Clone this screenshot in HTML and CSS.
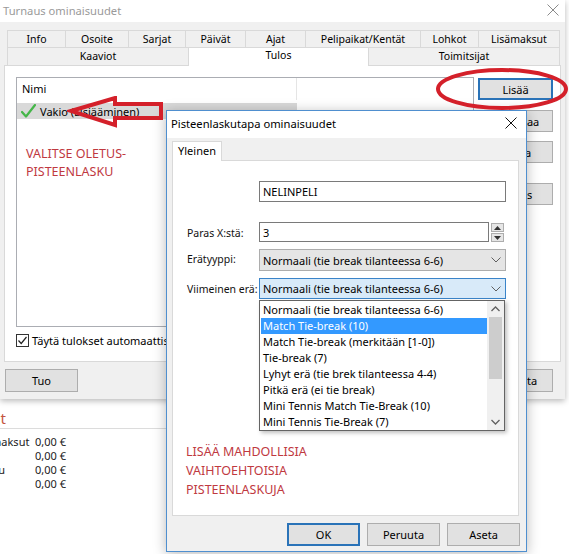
FILE: index.html
```html
<!DOCTYPE html>
<html lang="fi">
<head>
<meta charset="utf-8">
<title>Turnaus ominaisuudet</title>
<link rel="stylesheet" href="styles.css">
</head>
<body>
<div class="desktop">

  <div class="bgwin">
    <div class="bg-head"><span>Maksut</span></div>
    <div class="bg-rule"></div>
    <div class="bg-rows">
      <span class="bg-label">Lisämaksut</span><span>0,00 €</span>
      <span class="bg-label"></span><span>0,00 €</span>
      <span class="bg-label">Maksu</span><span>0,00 €</span>
      <span class="bg-label"></span><span>0,00 €</span>
    </div>
  </div>

  <div class="mainwin">
    <div class="mw-title">
      <span class="mw-title-text">Turnaus ominaisuudet</span>
      <svg class="mw-close" width="12" height="12" viewBox="0 0 12 12"><path d="M0.5 0.5L11.5 11.5M11.5 0.5L0.5 11.5" stroke="#8a8a8a" stroke-width="1" fill="none"/></svg>
    </div>
    <div class="mw-body">
      <div class="tabs">
        <div class="tabrow r1">
          <div class="tab">Info</div>
          <div class="tab">Osoite</div>
          <div class="tab">Sarjat</div>
          <div class="tab">Päivät</div>
          <div class="tab">Ajat</div>
          <div class="tab">Pelipaikat/Kentät</div>
          <div class="tab">Lohkot</div>
          <div class="tab">Lisämaksut</div>
        </div>
        <div class="tabrow r2">
          <div class="tab">Kaaviot</div>
          <div class="tab active">Tulos</div>
          <div class="tab">Toimitsijat</div>
        </div>
      </div>
      <div class="tabpage">
        <div class="listcol">
          <div class="listbox">
            <div class="lb-head"><span class="lb-col">Nimi</span></div>
            <div class="lb-row">
              <svg class="okmark" width="15" height="14" viewBox="0 0 15 14"><path d="M1 8 L5 12.5 L14 1" stroke="#45b649" stroke-width="2.2" fill="none" stroke-linecap="round" stroke-linejoin="round"/></svg>
              <span>Vakio (Lisiääminen)</span>
            </div>
          </div>
          <div class="chk">
            <span class="chkbox"><svg width="11" height="11" viewBox="0 0 11 11"><path d="M1.5 5.5 L4.2 8.5 L9.5 2" stroke="#222" stroke-width="1.2" fill="none"/></svg></span>
            <span>Täytä tulokset automaattisesti</span>
          </div>
        </div>
        <div class="btncol">
          <button class="btn focus">Lisää</button>
          <button class="btn b2">Muokkaa</button>
          <button class="btn b3">Poista</button>
          <button class="btn b4">Oletus</button>
        </div>
      </div>
      <div class="mw-foot">
        <button class="btn">Tuo</button>
        <span class="grow"></span>
        <button class="btn last">Peruuta</button>
      </div>
    </div>
  </div>

  <div class="dialog">
    <div class="dlg-title">
      <span>Pisteenlaskutapa ominaisuudet</span>
      <svg width="12" height="12" viewBox="0 0 12 12"><path d="M0.5 0.5L11.5 11.5M11.5 0.5L0.5 11.5" stroke="#111" stroke-width="1" fill="none"/></svg>
    </div>
    <div class="dlg-body">
      <div class="dtabs"><div class="dtab">Yleinen</div></div>
      <div class="dpage">
        <div class="form">
          <span></span>
          <div class="field text">NELINPELI</div>
          <div class="sep"></div>
          <label class="lbl">Paras X:stä:</label>
          <div class="numrow">
            <div class="field num">3</div>
            <div class="spin">
              <span class="spinbtn"><svg width="7" height="4" viewBox="0 0 7 4"><path d="M0 4 L3.5 0 L7 4Z" fill="#333"/></svg></span>
              <span class="spinbtn"><svg width="7" height="4" viewBox="0 0 7 4"><path d="M0 0 L3.5 4 L7 0Z" fill="#333"/></svg></span>
            </div>
          </div>
          <label class="lbl l2">Erätyyppi:</label>
          <div class="combo">
            <span>Normaali (tie break tilanteessa 6-6)</span>
            <svg width="10" height="6" viewBox="0 0 10 6"><path d="M0.5 0.5 L5 5 L9.5 0.5" stroke="#606060" fill="none"/></svg>
          </div>
          <label class="lbl l3">Viimeinen erä:</label>
          <div class="combo open">
            <span>Normaali (tie break tilanteessa 6-6)</span>
            <svg width="10" height="6" viewBox="0 0 10 6"><path d="M0.5 0.5 L5 5 L9.5 0.5" stroke="#606060" fill="none"/></svg>
            <div class="dropdown">
              <ul class="items">
                <li>Normaali (tie break tilanteessa 6-6)</li>
                <li class="sel">Match Tie-break (10)</li>
                <li>Match Tie-break (merkitään [1-0])</li>
                <li>Tie-break (7)</li>
                <li>Lyhyt erä (tie brek tilanteessa 4-4)</li>
                <li>Pitkä erä (ei tie break)</li>
                <li>Mini Tennis Match Tie-Break (10)</li>
                <li>Mini Tennis Tie-Break (7)</li>
              </ul>
              <div class="vscroll">
                <svg class="arr" width="9" height="6" viewBox="0 0 9 6"><path d="M0.5 5 L4.5 1 L8.5 5" stroke="#606060" stroke-width="1.3" fill="none"/></svg>
                <div class="track"><div class="thumb"></div></div>
                <svg class="arr" width="9" height="6" viewBox="0 0 9 6"><path d="M0.5 1 L4.5 5 L8.5 1" stroke="#606060" stroke-width="1.3" fill="none"/></svg>
              </div>
            </div>
          </div>
        </div>
        <p class="note note-add">LISÄÄ MAHDOLLISIA<br>VAIHTOEHTOISIA<br>PISTEENLASKUJA</p>
      </div>
      <div class="dlg-foot">
        <button class="btn dbtn focus">OK</button>
        <button class="btn dbtn">Peruuta</button>
        <button class="btn dbtn">Aseta</button>
      </div>
    </div>
  </div>

  <p class="note note-default">VALITSE OLETUS-<br>PISTEENLASKU</p>

  <svg class="mark-arrow" width="100" height="40" viewBox="0 0 100 40"><path d="M4 15 L48 2 L48 8 L94 8 L94 22 L48 22 L48 29 Z" stroke="#d4202a" stroke-width="4" fill="none" stroke-linejoin="miter"/></svg>
  <svg class="mark-ellipse" width="136" height="46" viewBox="0 0 136 46"><ellipse cx="67" cy="22" rx="64" ry="19" stroke="#d4202a" stroke-width="4" fill="none"/></svg>

</div>
</body>
</html>
```

FILE: styles.css
```css
* { box-sizing: border-box; }
html, body { margin: 0; padding: 0; }
body {
  width: 569px;
  height: 554px;
  overflow: hidden;
  background: #fff;
  font-family: "Noto Sans", "Open Sans", sans-serif;
  font-size: 11px;
  color: #000;
}
.desktop { position: relative; width: 569px; height: 554px; overflow: hidden; }

/* background window */
.bgwin { position: absolute; left: -29px; top: 408px; width: 220px; }
.bg-head { width: 35px; height: 20px; display: flex; justify-content: flex-end; align-items: center; white-space: nowrap; font-size: 15px; color: #c4553f; }
.bg-rule { height: 1px; background: #dcdcdc; margin-left: 29px; width: 170px; }
.bg-rows { display: grid; grid-template-columns: 64px auto; line-height: 14px; margin-top: 6px; color: #222; }

/* main window */
.mainwin {
  position: absolute; left: 0; top: 0; width: 565px; height: 399px;
  background: #f0f0f0;
  box-shadow: 0 2px 6px rgba(0,0,0,.28);
  display: flex; flex-direction: column;
}
.mw-title { height: 22px; background: #fff; display: flex; align-items: center; justify-content: space-between; padding: 0 6px 2px 3px; }
.mw-title-text { font-size: 11.2px; color: #9a9a9a; }
.mw-body { flex: 1; padding: 8px 4px 0 4px; display: flex; flex-direction: column; }
.tabs { margin-left: 3px; width: 553px; }
.tabrow { display: grid; }
.r1 { grid-template-columns: 59px 63px 57px 60px 60px 115px 58px 81px; height: 17px; }
.r2 { grid-template-columns: 182px 180px 191px; height: 18px; }
.tab {
  border-top: 1px solid #d9d9d9; border-right: 1px solid #d9d9d9;
  background: #f0f0f0; text-align: center; font-size: 10.5px; line-height: 16px; white-space: nowrap;
}
.tab:first-child { border-left: 1px solid #d9d9d9; }
.tab.active { background: #fff; position: relative; z-index: 1; margin-bottom: -1px; line-height: 14px; }

.tabpage {
  height: 297px; background: #fff; border: 1px solid #d9d9d9;
  padding: 11px 0 0 11px; display: flex; gap: 4px;
}
.listcol { width: 458px; display: flex; flex-direction: column; }
.listbox { height: 250px; border: 1px solid #abadb3; background: #fff; }
.lb-head { height: 22px; display: flex; }
.lb-col { width: 280px; border-right: 1px solid #e5e5e5; padding-left: 5px; line-height: 22px; }
.lb-row { margin-top: 3px; height: 16px; width: 280px; background: #d9d9d9; display: flex; align-items: center; gap: 4px; padding-left: 4px; }
.okmark { flex: none; }
.chk { margin-top: 7px; display: flex; align-items: center; gap: 3px; height: 13px; white-space: nowrap; }
.chkbox { width: 13px; height: 13px; border: 1px solid #333; display: flex; align-items: center; justify-content: center; background: #fff; }

.btncol { display: flex; flex-direction: column; padding-top: 1px; }
.btn {
  width: 75px; height: 22px; padding: 0;
  font-family: inherit; font-size: 11px; color: #000;
  background: #e1e1e1; border: 1px solid #adadad;
}
.btn.focus { border: 2px solid #2a73b8; }
.b2 { margin-top: 10px; }
.b3 { margin-top: 9px; }
.b4 { margin-top: 20px; }

.mw-foot { display: flex; gap: 5px; padding: 7px 8px 0 1px; }
.mw-foot .btn { width: 73px; height: 23px; }
.grow { flex: 1; }

/* dialog */
.dialog {
  position: absolute; left: 166px; top: 110px; width: 361px; height: 442px;
  background: #f0f0f0; border: 1px solid #4f8fcf;
  box-shadow: 0 2px 12px rgba(0,0,0,.28);
  display: flex; flex-direction: column;
}
.dlg-title { height: 27px; background: #fff; display: flex; align-items: center; justify-content: space-between; padding: 0 9px 3px 4px; font-size: 11.2px; }
.dlg-body { flex: 1; padding: 3px 6px 0 5px; display: flex; flex-direction: column; }
.dtabs { display: flex; height: 19px; }
.dtab { width: 50px; height: 20px; background: #fff; border: 1px solid #d9d9d9; border-bottom: none; text-align: center; line-height: 17px; position: relative; z-index: 1; }
.dpage { width: 347px; height: 356px; background: #fff; border: 1px solid #d9d9d9; padding: 20px 0 0 14px; }
.form { display: grid; grid-template-columns: 72px 247px; align-items: center; }
.field { height: 21px; border: 1px solid #7a7a7a; background: #fff; padding-left: 3px; line-height: 19px; }
.sep { grid-column: 1 / 3; height: 1px; background: #a0a0a0; margin-top: 12px; border-bottom: 1px solid #fff; }
.lbl { margin-top: 8px; color: #111; white-space: nowrap; font-size: 10.5px; }
.numrow { margin-top: 7px; display: flex; gap: 2px; }
.field.num { width: 230px; height: 20px; }
.spin { width: 13px; display: flex; flex-direction: column; gap: 1px; padding-top: 1px; }
.spinbtn { height: 9px; background: #e6e6e6; border: 1px solid #adadad; display: flex; align-items: center; justify-content: center; }
.l2 { margin-top: 5px; }
.combo {
  position: relative; height: 22px; margin-top: 7px;
  background: #e5e5e5; border: 1px solid #adadad;
  display: flex; align-items: center; justify-content: space-between; padding: 0 4px 0 3px;
}
.l3 { margin-top: 7px; }
.combo.open { height: 21px; margin-top: 7px; background: #d8eaf9; border-color: #3a84c9; }
.dropdown {
  position: absolute; left: -1px; top: 21px; width: 246px; height: 131px;
  background: #fff; border: 1px solid #646464; display: flex;
  box-shadow: 2px 2px 4px rgba(0,0,0,.25); z-index: 5;
}
.items { list-style: none; margin: 0; padding: 1px 0 0 1px; flex: 1; }
.items li { height: 16px; line-height: 16px; padding-left: 2px; white-space: nowrap; }
.items li.sel { background: #3399ff; color: #fff; }
.vscroll { width: 17px; background: #f0f0f0; display: flex; flex-direction: column; align-items: center; }
.arr { margin: 5px 0; flex: none; }
.track { flex: 1; width: 100%; padding: 0 2px; }
.thumb { height: 62px; background: #cdcdcd; }

.note { margin: 0; color: #c0393f; font-size: 12.5px; line-height: 19px; white-space: nowrap; }
.note-add { margin-top: 143px; margin-left: -1px; }
.dlg-foot { display: flex; justify-content: flex-end; gap: 7px; padding-top: 7px; }
.dbtn { width: 73px; height: 23px; }

/* annotations over the screenshot */
.note-default { position: absolute; left: 26px; top: 145px; line-height: 18px; z-index: 10; }
.mark-arrow { position: absolute; left: 67px; top: 96px; z-index: 10; }
.mark-ellipse { position: absolute; left: 435px; top: 67px; z-index: 10; }
```
